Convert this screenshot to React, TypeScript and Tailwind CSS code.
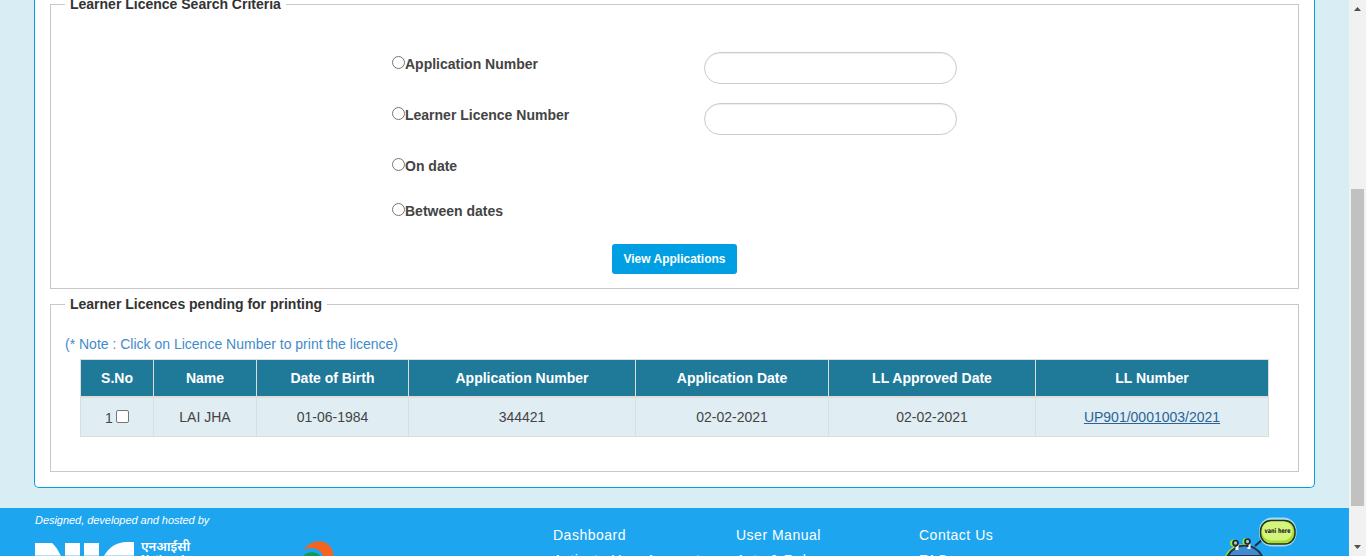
import type { ReactNode } from 'react';

const headers = ['S.No', 'Name', 'Date of Birth', 'Application Number', 'Application Date', 'LL Approved Date', 'LL Number'];

function Radio({ label }: { label: string }) {
  return (
    <label className="flex h-5 w-[312px] items-center">
      <span className="-mt-[3px] h-[13px] w-[13px] rounded-full border border-[#767676] bg-white" />
      <span className="font-bold text-[#444]">{label}</span>
    </label>
  );
}

function Field() {
  return (
    <input className="h-8 w-[253px] rounded-2xl border border-[#ccc] bg-white px-3 shadow-[inset_0_1px_1px_rgba(0,0,0,0.075)] outline-none" />
  );
}

function Group({ title, className, children }: { title: string; className: string; children: ReactNode }) {
  return (
    <fieldset className={'w-[1249px] shrink-0 border border-[#c8c8c8] px-[14px] ' + className}>
      <legend className="h-5 px-[5px] font-bold text-[#333]">{title}</legend>
      {children}
    </fieldset>
  );
}

function NicLogo() {
  return (
    <svg width="100" height="14" viewBox="0 0 100 14" fill="#fff">
      <path d="M0 1H17Q21 4 26 14H0ZM30 1H45V14H30ZM49 1H64V14H49ZM69 14Q77 0 92 0H99V14Z" />
      <path d="M0 13H26V14H0ZM30 13H45V14H30ZM49 13H64V14H49ZM69 13H99V14H69Z" fill="#b5e0fa" />
    </svg>
  );
}

function SwirlLogo() {
  return (
    <svg width="34" height="16" viewBox="0 0 34 16">
      <path d="M2.5 9.5C7 3 12 0.3 18 0.3C27 0.3 32.5 7 32.5 16H22C21 10 15 7 9.5 7C7 7 4.5 8 2.5 9.5Z" fill="#f26422" />
      <path d="M1.5 16C3.500 12.500 7 11.300 11 11.300C15 11.300 18 13 20 16Z" fill="#109a58" />
    </svg>
  );
}

function Vani() {
  return (
    <svg width="82" height="40" viewBox="0 0 82 40">
      <path d="M6 40Q12 28 25 28Q35 28 40 40Z" fill="#9be82c" />
      <path d="M8.500 40Q15 29.500 26 29.500Q37 29.500 43 40Z" fill="#408bd3" stroke="#223347" strokeWidth="2" />
      <path d="M18 34V28M30 33V27" stroke="#fff" strokeWidth="3" />
      <path d="M16.500 31V27M28.500 31V26M36 30L44 23" stroke="#222833" strokeWidth="2" />
      <circle cx="14.500" cy="27" r="3.500" fill="#9be82c" />
      <circle cx="16.500" cy="27" r="2.500" fill="#9cc" stroke="#222833" strokeWidth="1.700" />
      <circle cx="27" cy="25.500" r="3.500" fill="#9be82c" />
      <circle cx="28.500" cy="25.500" r="2.500" fill="#9cc" stroke="#222833" strokeWidth="1.700" />
      <rect x="40" y="1.500" width="37.500" height="29" rx="13" fill="#a5dcf5" />
      <rect x="41.500" y="4.500" width="34.500" height="23.500" rx="10.500" fill="#a9dc35" stroke="#26331d" strokeWidth="1.500" />
      <rect x="43" y="5.500" width="30.500" height="19" rx="9" fill="#d3f57d" />
      <text x="58.500" y="17" textAnchor="middle" fontSize="6.500" fontWeight="700" fill="#111" className="font-['DejaVu_Sans'] tracking-normal" textLength="26" lengthAdjust="spacingAndGlyphs">vani here</text>
    </svg>
  );
}

function LinkColumn({ items }: { items: string[] }) {
  return (
    <div className="flex w-[183px] flex-col gap-[5px] whitespace-nowrap tracking-[0.5px]">
      {items.map((item) => (
        <a key={item} className="h-5">{item}</a>
      ))}
    </div>
  );
}

export default function App() {
  return (
    <div className="flex h-[556px] w-[1366px] overflow-hidden bg-[#d9edf5] font-['Liberation_Sans',Arial,sans-serif] text-sm leading-5 text-[#444]">
      <div className="flex h-[556px] w-[1349px] flex-col">
        <main className="ml-[34px] flex h-[488px] w-[1281px] shrink-0 flex-col items-center rounded-b-[5px] border border-t-0 border-[#009fe0] bg-white">
          <Group title="Learner Licence Search Criteria" className="-mt-[6px] h-[295px]">
            <div className="ml-[327px] flex flex-col">
              <div className="mt-[38px] flex h-8"><div className="mt-0.5"><Radio label="Application Number" /></div><Field /></div>
              <div className="mt-[19px] flex h-8"><div className="mt-0.5"><Radio label="Learner Licence Number" /></div><Field /></div>
              <div className="mt-[21px]"><Radio label="On date" /></div>
              <div className="mt-[25px]"><Radio label="Between dates" /></div>
            </div>
            <button className="ml-[547px] mt-[23px] block h-[30px] w-[125px] rounded-[3px] bg-[#009fe3] text-center text-xs font-bold text-white">View Applications</button>
          </Group>
          <Group title="Learner Licences pending for printing" className="mt-[5px] h-[178px]">
            <p className="mt-5 h-[25px] text-[#428bca]">(* Note : Click on Licence Number to print the licence)</p>
            <table className="ml-[15px] w-[1189px] table-fixed border-separate border-spacing-0 border-l border-t border-[#ddd] text-center">
              <colgroup>
                <col className="w-[73px]" /><col className="w-[103px]" /><col className="w-[152px]" /><col className="w-[227px]" />
                <col className="w-[193px]" /><col className="w-[207px]" /><col className="w-[233px]" />
              </colgroup>
              <thead>
                <tr className="h-[38px] bg-[#1f7a9a] text-white">
                  {headers.map((h) => <th key={h} className="border-b-2 border-r border-[#ddd] p-0 font-bold">{h}</th>)}
                </tr>
              </thead>
              <tbody>
                <tr className="h-[39px] bg-[#e0edf3] [&>td]:border-b [&>td]:border-r [&>td]:border-[#ddd] [&>td]:p-0">
                  <td>
                    <div className="flex h-5 items-start justify-center gap-[3px]">
                      <span className="mt-px">1</span>
                      <span className="mt-[3px] h-[13px] w-[13px] rounded-[2px] border border-[#767676] bg-white" />
                    </div>
                  </td>
                  <td>LAI JHA</td>
                  <td>01-06-1984</td>
                  <td>344421</td>
                  <td>02-02-2021</td>
                  <td>02-02-2021</td>
                  <td><a className="text-[#2a6496] underline">UP901/0001003/2021</a></td>
                </tr>
              </tbody>
            </table>
          </Group>
        </main>
        <footer className="mt-5 flex h-12 shrink-0 overflow-hidden bg-[#1da5f0] text-white">
          <div className="ml-[35px] w-[266px] pt-[5px]">
            <p className="h-[15px] text-[11px] italic leading-[15px] tracking-[-0.04px]">Designed, developed and hosted by</p>
            <div className="mt-[14px] flex items-start">
              <NicLogo />
              <div className="-mt-[6px] ml-[6px] whitespace-nowrap">
                <p className="h-[16px] font-['Noto_Sans',sans-serif] text-[13px] font-semibold leading-[20px]">एनआईसी</p>
                <p className="text-[11px] font-bold leading-[14px]">National</p>
              </div>
            </div>
          </div>
          <div className="w-[252px] pt-[33px]"><SwirlLogo /></div>
          <nav className="flex pt-[17px]">
            <LinkColumn items={['Dashboard', 'Activate User Account']} />
            <LinkColumn items={['User Manual', 'Acts & Rules']} />
            <LinkColumn items={['Contact Us', 'FAQs']} />
          </nav>
          <div className="ml-[117px] pt-2"><Vani /></div>
        </footer>
      </div>
      <div className="flex h-[556px] w-[17px] flex-col items-center bg-[#f1f1f1]">
        <svg className="mt-[7px]" width="7" height="4" viewBox="0 0 7 4"><path d="M0 4L3.5 0L7 4Z" fill="#505050" /></svg>
        <div className="mt-[178px] h-[317px] w-[13px] bg-[#c1c1c1]" />
        <svg className="mt-[39px]" width="7" height="4" viewBox="0 0 7 4"><path d="M0 0L3.5 4L7 0Z" fill="#505050" /></svg>
      </div>
    </div>
  );
}
